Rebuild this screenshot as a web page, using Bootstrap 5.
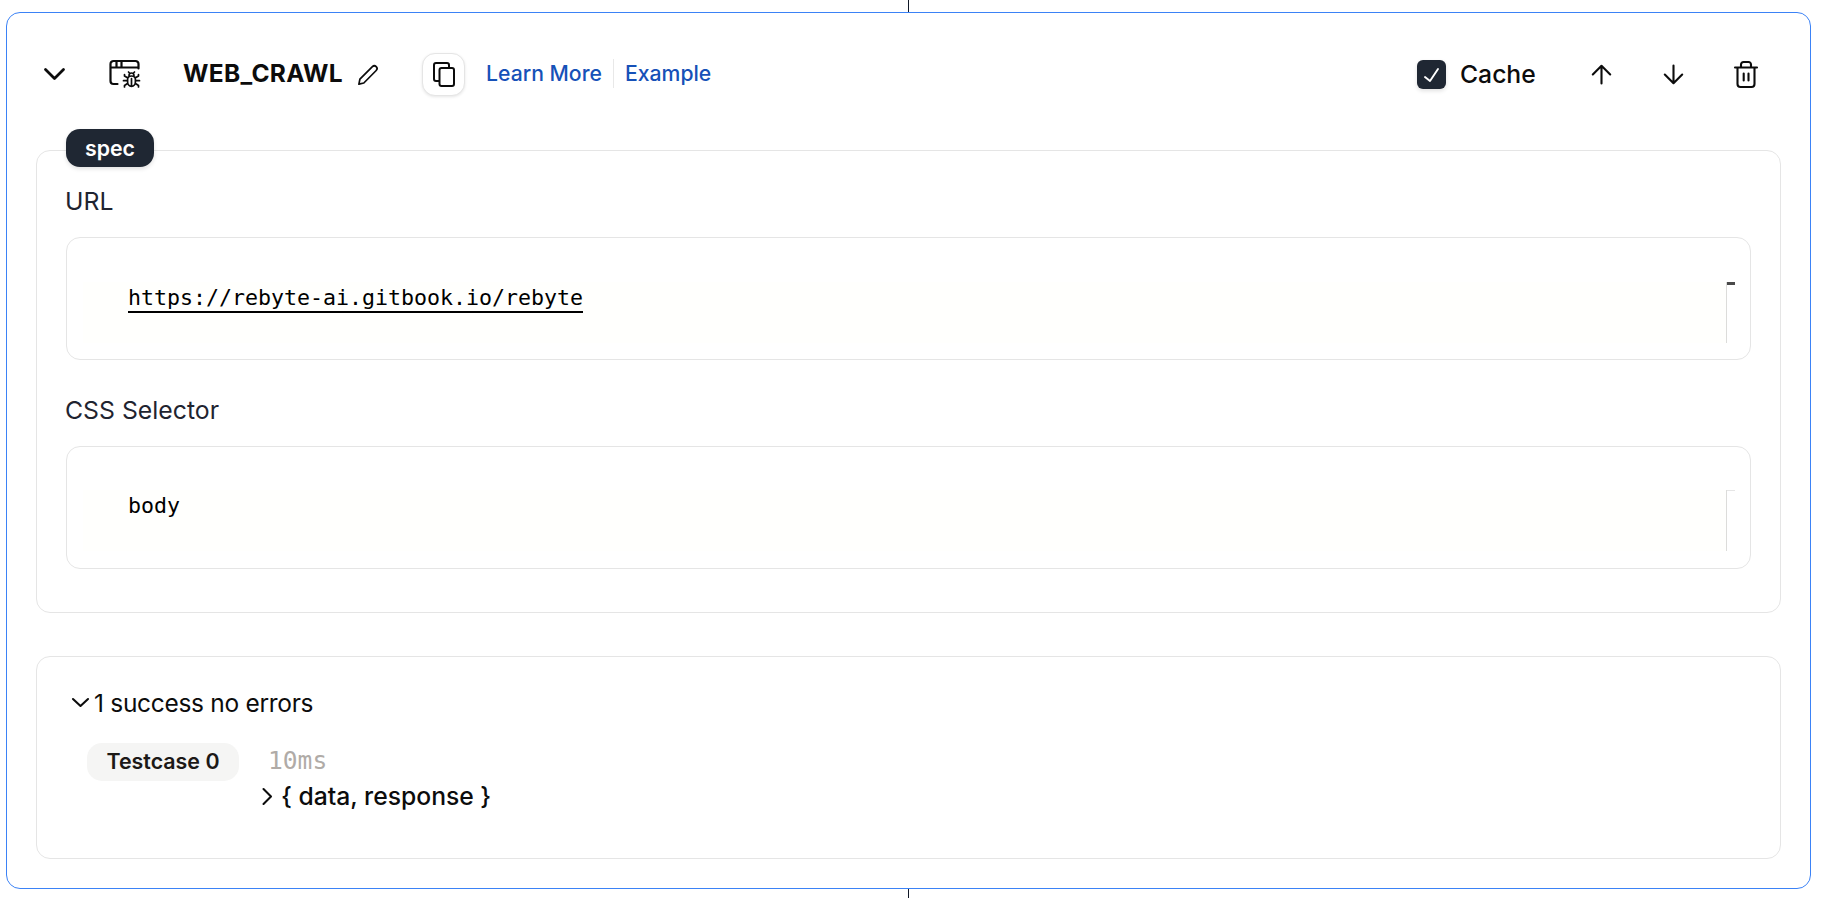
<!DOCTYPE html>
<html lang="en">
<head>
<meta charset="utf-8">
<meta name="viewport" content="width=device-width, initial-scale=1">
<title>WEB_CRAWL</title>
<link href="https://cdn.jsdelivr.net/npm/bootstrap@5.3.0/dist/css/bootstrap.min.css" rel="stylesheet">
<style>
body{font-family:Inter,"Liberation Sans",sans-serif;color:#0c0c0c;background:#fff;font-size:24px;line-height:32px;height:898px;overflow:hidden}
svg{display:block;fill:none;stroke:currentColor;stroke-linecap:round;stroke-linejoin:round;overflow:visible;flex:none}
.wire{width:1px;margin-left:908px;background:#111827}
.wire-top{height:12px}
.wire-end{height:9px}
.node{width:1805px;height:877px;margin-left:6px;border:1px solid #3b82f6;border-radius:14px;padding:0 29px}
.node-head{height:137px;padding:0 23px 14px 8px}
.panel{border:1px solid #e5e5e5;border-radius:14px}
.spec{height:463px;padding:0 29px;position:relative}
.tag{position:absolute;left:29px;top:-22px;width:88px;height:38px;border-radius:14px;background:#1f2733;color:#fff;font-size:21.3px;font-weight:600;box-shadow:0 2px 4px rgba(0,0,0,.12)}
.lbl{color:#1f2430;white-space:nowrap;font-size:24.8px;height:86px;padding-top:34px;margin-left:-1px}
.editor{height:123px;padding:44px 15px 16px 16px}
.editor-short{padding-top:43px}
.code{font-family:"DejaVu Sans Mono","Liberation Mono",monospace;font-size:21.6px;color:#000;background:#fffffd;height:61px;white-space:nowrap;line-height:32px;padding-left:45px}
.code u{text-decoration:none;border-bottom:2px solid #000;display:inline-block;height:31px}
.minimap{width:9px;height:61px;border-left:1px solid #dcdcda}
.minimap i{display:block;height:1px;background:#e5e5e5}
.minimap .ink{height:3px;background:#4a4a4a}
.results{height:203px;margin-top:43px}
.title{font-weight:700;width:175px;white-space:nowrap;font-size:24.5px;line-height:32px;letter-spacing:.3px;margin:0 0 4px 43px}
.copy{width:43px;height:43px;margin-left:44px;border:1px solid #e5e5e5;border-radius:13px;box-shadow:0 1px 3px rgba(0,0,0,.1);background:#fff;color:#0c0c0c}
.doc{font-size:21.2px;font-weight:500;color:#1651b8;text-decoration:none;white-space:nowrap;margin-bottom:4px}
.doc-more{width:127px;margin-left:21px}
.doc-example{margin-left:11px}
.rule{width:1px;height:29px;background:#e8e8e8;margin-bottom:2px}
.check{width:29px;height:29px;border-radius:6px;background:#1f2733;color:#fff;box-shadow:0 2px 4px rgba(0,0,0,.12)}
.cache{width:132px;margin:0 0 2px 14px;font-weight:500;font-size:24.7px}
.okmsg{margin-left:5px;font-size:24.5px;letter-spacing:-.3px}
.pill{width:152px;height:38px;padding-bottom:2px;border-radius:15px;background:#f5f5f4;font-size:21.4px;font-weight:600;color:#1c1917;white-space:nowrap}
.ms{font-family:"DejaVu Sans Mono",monospace;color:#b0aba7;font-size:24.6px;padding-left:6px;height:36px;line-height:36px}
.obj{margin-left:8px;font-size:24.7px;font-weight:500}
</style>
</head>
<body>
<div class="wire wire-top"></div>
<main class="node">
  <header class="node-head d-flex align-items-center">
    <svg style="margin-bottom:2px" width="21" height="12" viewBox="0 0 21 12" stroke-width="2.800"><path d="M1.500 1.500 10.500 10.500 19.500 1.500"/></svg>
    <svg style="margin:0 0 2px 44px" width="31" height="28" viewBox="0 0 31 28" stroke-width="2.200"><path d="M8.500 24H4.500a3 3 0 0 1-3-3V4a3 3 0 0 1 3-3h22a3 3 0 0 1 3 3v4.500M1.500 7.500h28M7.500 1v6M12.500 1v6"/><path stroke-width="1.700" d="M18.600 19.500c0-2.300 1.200-3.500 3.900-3.500s3.900 1.200 3.900 3.500v2.500c0 2.300-1.500 4.300-3.900 4.300s-3.900-2-3.900-4.300zM22.500 18.500v7.500M20 15.500a2.500 2.500 0 0 1 5 0M20.500 13l-1-1M24.500 13l1-1M15.500 14.500v1.500l3 1.800M29.500 14.500v1.500l-3 1.800M14.500 20.700h4M26.500 20.700h4M15.500 27v-1.500l3-2M29.500 27v-1.500l-3-2"/></svg>
    <h1 class="title">WEB_CRAWL</h1>
    <svg width="20" height="20" viewBox="0 0 20 20" stroke-width="1.700"><path d="M.9 19.200l1-5L14.400 1.700a2.600 2.600 0 0 1 3.800 3.800L5.800 18z"/></svg>
    <button class="copy d-flex align-items-center justify-content-center p-0" aria-label="Copy"><svg width="22" height="25" viewBox="0 0 22 25" stroke-width="2"><rect x="6.500" y="6" width="14.500" height="18" rx="2"/><path d="M6 19H3a2 2 0 0 1-2-2V3a2 2 0 0 1 2-2h11a2 2 0 0 1 2 2v2"/></svg></button>
    <a class="doc doc-more" href="#">Learn More</a>
    <span class="rule"></span>
    <a class="doc doc-example" href="#">Example</a>
    <label class="d-flex align-items-center ms-auto">
      <span class="check d-flex align-items-center justify-content-center"><svg width="15" height="14" viewBox="0 0 15 14" stroke-width="1.900"><path d="M1 9l5 4L14 1"/></svg></span>
      <span class="cache">Cache</span>
    </label>
    <svg width="19" height="19" viewBox="0 0 19 19" stroke-width="2.100"><path d="M9.500 18.500V1M.8 9.500 9.500 .8l8.700 8.700"/></svg>
    <svg style="margin-left:53px" width="19" height="19" viewBox="0 0 19 19" stroke-width="2.100"><path d="M9.500 .5V18M.8 9.500l8.700 8.700 8.700-8.700"/></svg>
    <svg style="margin-left:51px" width="24" height="27" viewBox="0 0 24 27" stroke-width="2.100"><path d="M1 6.500h22M3.500 7v16a3 3 0 0 0 3 3h11a3 3 0 0 0 3-3V7M7 6V3.500a2.500 2.500 0 0 1 2.500-2.500h5A2.500 2.500 0 0 1 17 3.500V6M9.700 12.500v7M14.500 12.500v7"/></svg>
  </header>

  <section class="panel spec">
    <span class="tag d-flex align-items-center justify-content-center">spec</span>
    <div class="lbl">URL</div>
    <div class="panel editor d-flex"><div class="code flex-fill"><u>https://rebyte-ai.gitbook.io/rebyte</u></div><div class="minimap"><i class="ink"></i></div></div>
    <div class="lbl">CSS Selector</div>
    <div class="panel editor editor-short d-flex"><div class="code flex-fill">body</div><div class="minimap"><i></i></div></div>
  </section>

  <section class="panel results">
    <div class="d-flex align-items-center" style="padding:30px 0 0 35px">
      <svg style="margin-bottom:1px" width="17" height="9" viewBox="0 0 17 9" stroke-width="2.100"><path d="M1 1l7.500 7L16 1"/></svg>
      <span class="okmsg">1 success no errors</span>
    </div>
    <div class="d-flex" style="padding:24px 0 0 50px">
      <span class="pill d-flex align-items-center justify-content-center">Testcase 0</span>
      <div style="margin-left:23px">
        <div class="ms">10ms</div>
        <div class="d-flex align-items-center" style="padding-top:1px">
          <svg width="11" height="17" viewBox="0 0 11 17" stroke-width="2.100"><path d="M1.500 1l7.500 7.500L1.500 16"/></svg>
          <span class="obj">{ data, response }</span>
        </div>
      </div>
    </div>
  </section>
</main>
<div class="wire wire-end"></div>
<script src="https://cdn.jsdelivr.net/npm/bootstrap@5.3.0/dist/js/bootstrap.bundle.min.js"></script>
</body>
</html>
